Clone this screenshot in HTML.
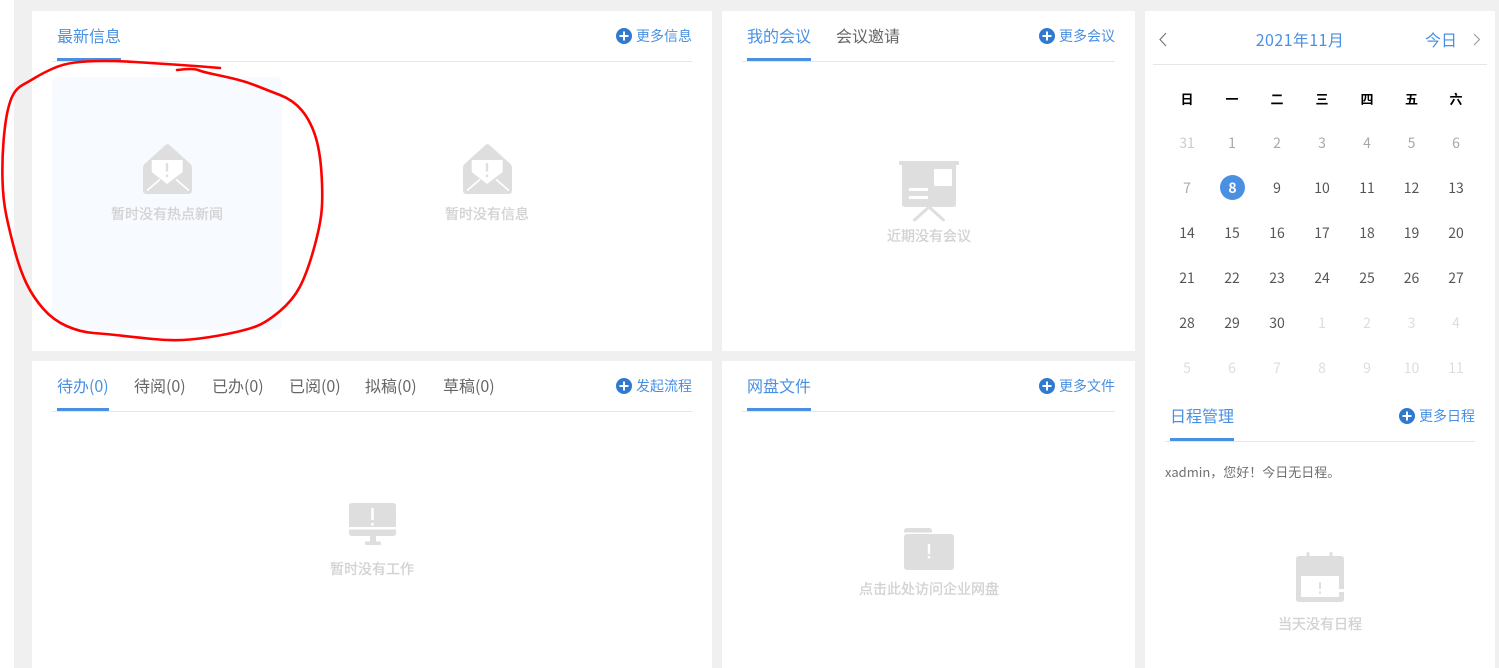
<!DOCTYPE html>
<html lang="zh-CN"><head><meta charset="utf-8"><title>工作台</title>
<style>
html,body{margin:0;padding:0;width:1499px;height:668px;overflow:hidden;background:#fff}
body{position:relative;font-family:"Liberation Sans","Noto Sans CJK SC",sans-serif}
.b{position:absolute}
.t{position:absolute;white-space:nowrap;line-height:20px;height:20px;font-family:"Noto Sans CJK SC","Liberation Sans",sans-serif}
.c{transform:translateX(-50%)}
.tab{font-size:16px;color:#666}
.on{color:#4a90e2}
.more{font-size:14px;color:#4a90e2}
.e{font-size:14px;color:#d2d2d2;-webkit-text-stroke:.3px #d2d2d2}
.n{font-size:14px;color:#555}
.g1{color:#a8a8a8}.g2{color:#ccc}.g3{color:#ddd}
.w{font-size:13px;color:#000;font-weight:700}
.line{background:#e6e6e6;height:1px}
.ul{background:#4a90e2;height:3px}
</style></head><body>
<div class="b" style="left:14px;top:0;width:1485px;height:668px;background:#f0f0f0"></div>
<div class="b" style="left:32px;top:11px;width:680px;height:340px;background:#fff"></div>
<div class="b" style="left:722px;top:11px;width:413px;height:340px;background:#fff"></div>
<div class="b" style="left:32px;top:361px;width:680px;height:307px;background:#fff"></div>
<div class="b" style="left:722px;top:361px;width:413px;height:307px;background:#fff"></div>
<div class="b" style="left:1145px;top:11px;width:350px;height:657px;background:#fff"></div>
<div class="b" style="left:52px;top:77px;width:230px;height:253px;background:#f7faff;border-radius:6px"></div>

<div class="b line" style="left:52px;top:61px;width:640px"></div>
<div class="b line" style="left:742px;top:61px;width:373px"></div>
<div class="b line" style="left:52px;top:411px;width:640px"></div>
<div class="b line" style="left:742px;top:411px;width:373px"></div>
<div class="b line" style="left:1153px;top:64px;width:334px"></div>
<div class="b line" style="left:1165px;top:441px;width:310px"></div>
<div class="b ul" style="left:57px;top:58px;width:64px"></div>
<div class="b ul" style="left:747px;top:58px;width:64px"></div>
<div class="b ul" style="left:57px;top:408px;width:52px"></div>
<div class="b ul" style="left:747px;top:408px;width:64px"></div>
<div class="b ul" style="left:1170px;top:438px;width:64px"></div>

<span class="t tab on" style="left:57px;top:25px">最新信息</span>
<span class="t more" style="left:636px;top:26px">更多信息</span>
<span class="t tab on" style="left:747px;top:25px">我的会议</span>
<span class="t tab" style="left:836px;top:25px">会议邀请</span>
<span class="t more" style="left:1059px;top:26px">更多会议</span>
<span class="t tab on" style="left:57px;top:375px">待办(0)</span>
<span class="t tab" style="left:134px;top:375px">待阅(0)</span>
<span class="t tab" style="left:212px;top:375px">已办(0)</span>
<span class="t tab" style="left:289px;top:375px">已阅(0)</span>
<span class="t tab" style="left:365px;top:375px">拟稿(0)</span>
<span class="t tab" style="left:443px;top:375px">草稿(0)</span>
<span class="t more" style="left:636px;top:376px">发起流程</span>
<span class="t tab on" style="left:747px;top:375px">网盘文件</span>
<span class="t more" style="left:1059px;top:376px">更多文件</span>
<span class="t tab on" style="left:1170px;top:405px">日程管理</span>
<span class="t more" style="left:1419px;top:406px">更多日程</span>

<span class="t e c" style="left:167px;top:204px">暂时没有热点新闻</span>
<span class="t e c" style="left:487px;top:204px">暂时没有信息</span>
<span class="t e c" style="left:929px;top:226px">近期没有会议</span>
<span class="t e c" style="left:372px;top:559px">暂时没有工作</span>
<span class="t e c" style="left:929px;top:579px">点击此处访问企业网盘</span>
<span class="t e c" style="left:1320px;top:614px">当天没有日程</span>

<span class="t c on" style="left:1300px;top:29px;font-size:16px;letter-spacing:.4px">2021年11月</span>
<span class="t on" style="left:1425px;top:29px;font-size:16px">今日</span>

<span class="t w c" style="left:1187px;top:89px">日</span><span class="t w c" style="left:1232px;top:89px">一</span><span class="t w c" style="left:1277px;top:89px">二</span><span class="t w c" style="left:1322px;top:89px">三</span><span class="t w c" style="left:1367px;top:89px">四</span><span class="t w c" style="left:1411.5px;top:89px">五</span><span class="t w c" style="left:1456px;top:89px">六</span>

<span class="t n c g2" style="left:1187px;top:133px">31</span><span class="t n c g1" style="left:1232px;top:133px">1</span><span class="t n c g1" style="left:1277px;top:133px">2</span><span class="t n c g1" style="left:1322px;top:133px">3</span><span class="t n c g1" style="left:1367px;top:133px">4</span><span class="t n c g1" style="left:1411.5px;top:133px">5</span><span class="t n c g1" style="left:1456px;top:133px">6</span>

<div class="b" style="left:1220px;top:175px;width:25px;height:25px;border-radius:50%;background:#4a90e2"></div>
<span class="t n c g1" style="left:1187px;top:178px">7</span><span class="t n c" style="left:1232.5px;top:178px;color:#fff;font-weight:700">8</span><span class="t n c" style="left:1277px;top:178px">9</span><span class="t n c" style="left:1322px;top:178px">10</span><span class="t n c" style="left:1367px;top:178px">11</span><span class="t n c" style="left:1411.5px;top:178px">12</span><span class="t n c" style="left:1456px;top:178px">13</span>

<span class="t n c" style="left:1187px;top:223px">14</span><span class="t n c" style="left:1232px;top:223px">15</span><span class="t n c" style="left:1277px;top:223px">16</span><span class="t n c" style="left:1322px;top:223px">17</span><span class="t n c" style="left:1367px;top:223px">18</span><span class="t n c" style="left:1411.5px;top:223px">19</span><span class="t n c" style="left:1456px;top:223px">20</span>

<span class="t n c" style="left:1187px;top:268px">21</span><span class="t n c" style="left:1232px;top:268px">22</span><span class="t n c" style="left:1277px;top:268px">23</span><span class="t n c" style="left:1322px;top:268px">24</span><span class="t n c" style="left:1367px;top:268px">25</span><span class="t n c" style="left:1411.5px;top:268px">26</span><span class="t n c" style="left:1456px;top:268px">27</span>

<span class="t n c" style="left:1187px;top:313px">28</span><span class="t n c" style="left:1232px;top:313px">29</span><span class="t n c" style="left:1277px;top:313px">30</span><span class="t n c g3" style="left:1322px;top:313px">1</span><span class="t n c g3" style="left:1367px;top:313px">2</span><span class="t n c g3" style="left:1411.5px;top:313px">3</span><span class="t n c g3" style="left:1456px;top:313px">4</span>

<span class="t n c g3" style="left:1187px;top:358px">5</span><span class="t n c g3" style="left:1232px;top:358px">6</span><span class="t n c g3" style="left:1277px;top:358px">7</span><span class="t n c g3" style="left:1322px;top:358px">8</span><span class="t n c g3" style="left:1367px;top:358px">9</span><span class="t n c g3" style="left:1411.5px;top:358px">10</span><span class="t n c g3" style="left:1456px;top:358px">11</span>

<span class="t" style="left:1165px;top:462px;font-size:13px;color:#707070">xadmin，您好！今日无日程。</span>

<svg class="b" style="left:0;top:0" width="1499" height="668" viewBox="0 0 1499 668" fill="none">
<defs>
<g id="plus"><circle cx="0" cy="0" r="8" fill="#2f7ad0"/><path d="M-4.5 0H4.5M0-4.5V4.5" stroke="#fff" stroke-width="2"/></g>
<g id="mail">
<path d="M165.5 145 Q167.5 143.3 169.5 145 L190.5 164 Q192 165.5 192 168 V190.5 Q192 194 188.5 194 H146.5 Q143 194 143 190.5 V168 Q143 165.5 144.5 164 Z" fill="#dedede"/>
<path d="M151.7 160 H182.7 V172 L167 184 L151.7 172 Z" fill="#fff"/>
<path d="M167 163 V171.5 M167 174.5 V177" stroke="#dedede" stroke-width="2.4"/>
<path d="M147.7 190 L159.3 180 M176.7 180 L188.3 190" stroke="#fff" stroke-width="1.8" stroke-linecap="round"/>
</g>
</defs>
<use href="#plus" x="624" y="36"/><use href="#plus" x="1047" y="36"/><use href="#plus" x="624" y="386"/><use href="#plus" x="1047" y="386"/><use href="#plus" x="1407" y="416"/>
<path d="M1166 33 L1160 39.5 L1166 46" stroke="#777" stroke-width="1.2"/>
<path d="M1474 34 L1479.5 39.5 L1474 45" stroke="#999" stroke-width="1.1"/>
<use href="#mail"/><use href="#mail" x="320"/>

<!-- meeting -->
<rect x="899" y="161" width="60" height="4" rx="1.5" fill="#dedede"/>
<path d="M902 165 H956 V204 Q956 207 953 207 H905 Q902 207 902 204 Z" fill="#dedede"/>
<rect x="934" y="169" width="18" height="17" rx="1" fill="#fff"/>
<rect x="909" y="188" width="19" height="3" fill="#fff"/><rect x="909" y="196" width="19" height="3" fill="#fff"/>
<path d="M929 207 L914.5 220 M929 207 L943.5 220" stroke="#dedede" stroke-width="3" stroke-linecap="round"/>

<!-- monitor -->
<path d="M352 503 H393 Q396 503 396 506 V527 H349 V506 Q349 503 352 503 Z" fill="#dedede"/>
<path d="M349 529.5 H396 V533 Q396 536 393 536 H352 Q349 536 349 533 Z" fill="#dedede"/>
<rect x="370" y="536" width="6" height="6" fill="#dedede"/>
<rect x="365" y="541.5" width="16" height="3.5" rx="1" fill="#dedede"/>
<path d="M372.5 508 V520 M372.5 523 V525.5" stroke="#fff" stroke-width="2.6"/>

<!-- folder -->
<path d="M904 532.5 V531 Q904 528 907 528 H929 Q932 528 932 531 V532.5 Z" fill="#dedede"/>
<rect x="904" y="534" width="50" height="36" rx="3" fill="#dedede"/>
<path d="M929 544 V554 M929 556 V558.5" stroke="#fff" stroke-width="2.4"/>

<!-- calendar -->
<path d="M1299 556 H1341 Q1344 556 1344 559 V589 H1339 V576 H1301 V597 H1339 V592 H1344 V599 Q1344 602 1341 602 H1299 Q1296 602 1296 599 V559 Q1296 556 1299 556 Z" fill="#dedede"/>
<path d="M1308 553.5 V557 M1331 553.5 V557" stroke="#dedede" stroke-width="3" stroke-linecap="round"/>
<path d="M1320 582 V589 M1320 591.5 V594" stroke="#dedede" stroke-width="2"/>

<!-- red ink -->
<path d="M220 68 Q197 66 173.5 64.5 Q150 63 135 62 Q120 61 103.5 61 Q87 61 75 62.5 Q63 64 53 68.5 Q43 73 35.5 77.5 Q28 82 22.5 85 Q17 88 13.5 94 Q10 100 7.5 111.5 Q5 123 3.5 141.5 Q2 160 2.5 180 Q3 200 6.5 216.5 Q10 233 15 251.5 Q20 270 26.5 283.5 Q33 297 43 308.5 Q53 320 66.5 326 Q80 332 93.5 333 Q107 334 120 335.5 Q133 337 153 339 Q173 341 190 339.5 Q207 338 227 334 Q247 330 257 326 Q267 322 280 311 Q293 300 300 286.5 Q307 273 313.5 250 Q320 227 321.5 212 Q323 197 321.5 173.5 Q320 150 315 135 Q310 120 301.5 110 Q293 100 280 95 Q267 90 257 86 Q247 82 237 79.5 Q227 77 215 74.5 Q203 72 198 70 Q193 68 177 70" stroke="#f00" stroke-width="2.6" stroke-linecap="round" stroke-linejoin="round"/>
</svg>
</body></html>
